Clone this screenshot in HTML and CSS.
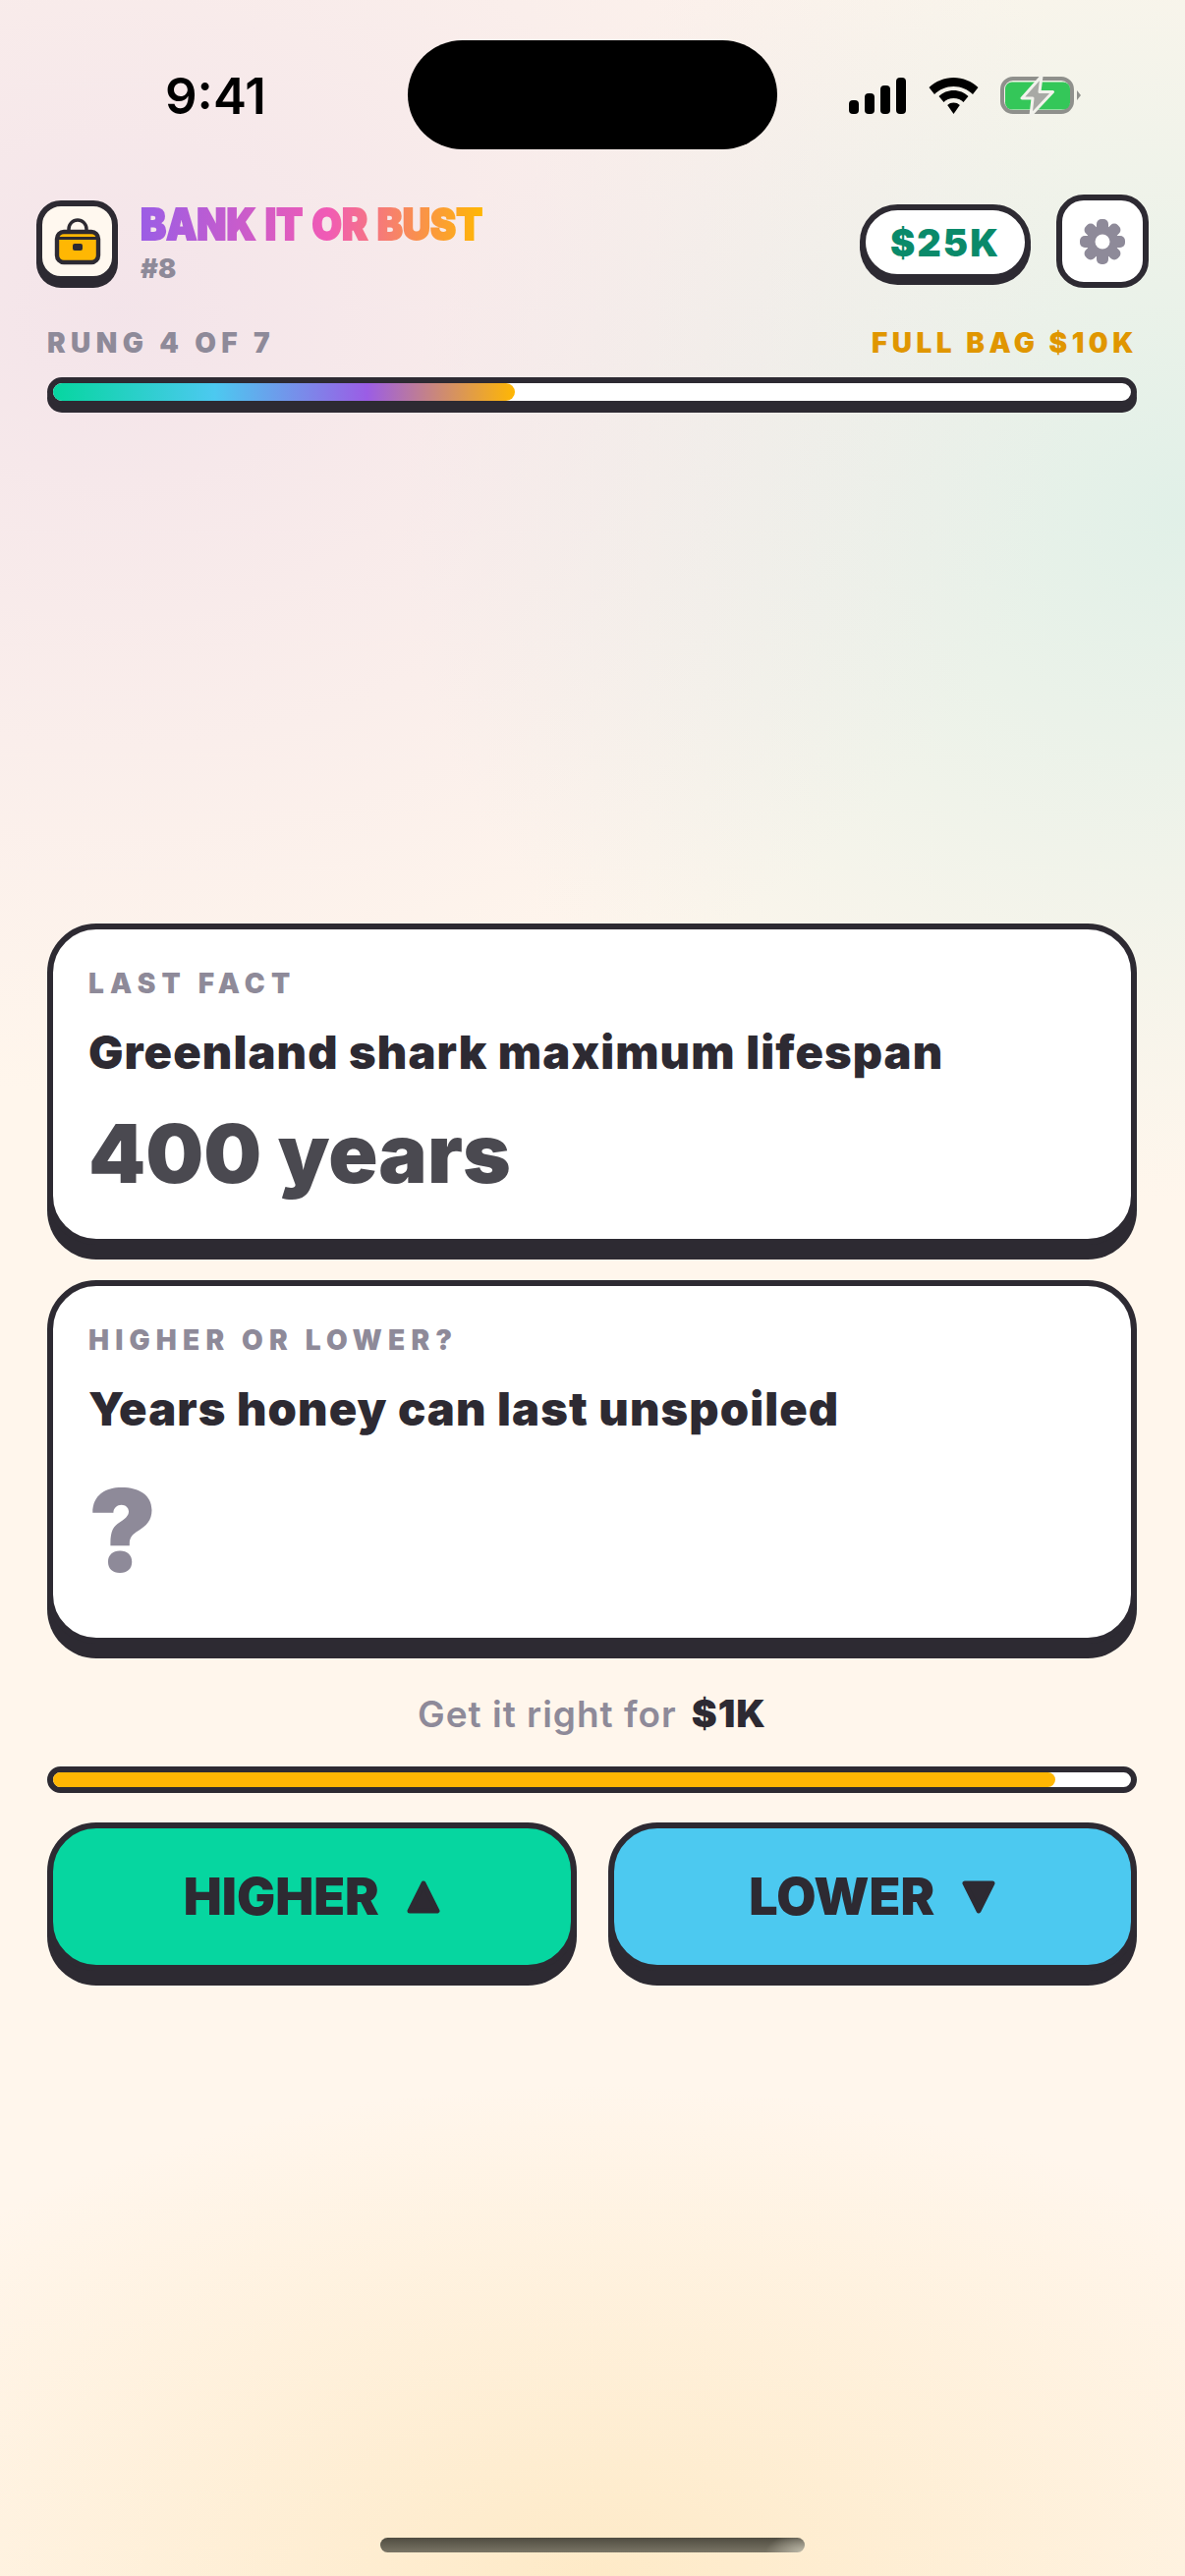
FILE: index.html
```html
<!DOCTYPE html>
<html lang="en">
<head>
    <meta charset="UTF-8">
    <meta name="viewport" content="width=device-width, initial-scale=1.0">
    <title>Bank It Or Bust</title>
    <link rel="stylesheet" href="styles.css">
</head>
<body>
    <div class="phone">
        <!-- status bar -->
        <div class="status-bar">
            <div class="time">9:41</div>
            <div class="notch"></div>
            <div class="status-icons">
                <svg class="ic-signal" width="59" height="37" viewBox="0 0 59 37">
                    <rect x="0" y="23" width="10" height="14" rx="4"/>
                    <rect x="16" y="16" width="10" height="21" rx="4"/>
                    <rect x="32" y="8" width="10" height="29" rx="4"/>
                    <rect x="48" y="0" width="10" height="37" rx="4"/>
                </svg>
                <svg class="ic-wifi" width="51" height="37" viewBox="0 0 51 37">
                    <path d="M25.500 0C35 0 43.800 3.700 50.500 10L45 17C40 12 33 9 25.500 9S11 12 6 17L.5 10C7.200 3.700 16 0 25.500 0Z"/>
                    <path d="M25.500 13C31.300 13 36.600 15.300 40.500 19L35.500 25C33 22.500 29.500 21 25.500 21S18 22.500 15.500 25L10.500 19C14.400 15.300 19.700 13 25.500 13Z"/>
                    <path d="M25.500 25.500C28 25.500 30 26.300 31.800 28L25.500 37L19.200 28C21 26.300 23 25.500 25.500 25.500Z"/>
                </svg>
                <svg class="ic-battery" width="82" height="41" viewBox="0 0 82 41">
                    <rect x="2" y="3" width="71" height="34" rx="11" fill="none" stroke="#8f908c" stroke-width="4"/>
                    <rect x="5" y="6.500" width="66" height="28" rx="7" fill="#34c759"/>
                    <path d="M78 15L82 20L78 25Z" fill="#8f908c"/>
                    <path d="M42 .5L22 23H33L31 40.500L53.500 16.500H40Z" fill="#a8a9a5" stroke="#f2f2ec" stroke-width="3" stroke-linejoin="round"/>
                </svg>
            </div>
        </div>

        <!-- header -->
        <div class="top-row">
            <div class="brand">
                <div class="app-icon">
                    <svg width="48" height="48" viewBox="0 0 48 48">
                        <path d="M15 14V11A9 9 0 0 1 33 11V14" fill="none" stroke="#2d2a32" stroke-width="3.500"/>
                        <rect x="3" y="14" width="42" height="31" rx="7" fill="#ffb703" stroke="#2d2a32" stroke-width="4.400"/>
                        <line x1="3" y1="20.500" x2="45" y2="20.500" stroke="#2d2a32" stroke-width="3"/>
                        <rect x="19" y="26" width="10" height="7" rx="2" fill="#2d2a32"/>
                    </svg>
                </div>
                <div class="brand-text">
                    <div class="brand-title">BANK IT OR BUST</div>
                    <div class="brand-num">#8</div>
                </div>
            </div>
            <div class="top-actions">
                <div class="money-pill">$25K</div>
                <div class="gear-btn">
                    <svg width="46" height="46" viewBox="0 0 46 46" fill="#8e8a99">
                        <circle cx="23" cy="23" r="16"/>
                        <rect x="17" y="0" width="12" height="46" rx="5"/>
                        <rect x="17" y="0" width="12" height="46" rx="5" transform="rotate(45 23 23)"/>
                        <rect x="17" y="0" width="12" height="46" rx="5" transform="rotate(90 23 23)"/>
                        <rect x="17" y="0" width="12" height="46" rx="5" transform="rotate(135 23 23)"/>
                        <circle cx="23" cy="23" r="7.500" fill="#fff"/>
                    </svg>
                </div>
            </div>
        </div>

        <!-- ladder progress -->
        <div class="ladder">
            <div class="ladder-labels">
                <span class="rung">RUNG 4 OF 7</span>
                <span class="full-bag">FULL BAG $10K</span>
            </div>
            <div class="track track-big">
                <div class="fill fill-ladder" style="width: 42.86%"></div>
            </div>
        </div>

        <!-- game -->
        <div class="game">
            <div class="card card-last">
                <div class="card-label">LAST FACT</div>
                <div class="card-title">Greenland shark maximum lifespan</div>
                <div class="card-value">400 years</div>
            </div>
            <div class="card card-next">
                <div class="card-label">HIGHER OR LOWER?</div>
                <div class="card-title">Years honey can last unspoiled</div>
                <div class="card-unknown">?</div>
            </div>
            <div class="reward"><span>Get it right for</span><b>$1K</b></div>
            <div class="track track-timer">
                <div class="fill fill-timer" style="width: 93%"></div>
            </div>
            <div class="choices">
                <button class="choice higher">HIGHER <svg width="34" height="34" viewBox="0 0 34 34"><path d="M17 3L31 31H3Z" fill="#2d2a32" stroke="#2d2a32" stroke-width="5" stroke-linejoin="round"/></svg></button>
                <button class="choice lower">LOWER <svg width="34" height="34" viewBox="0 0 34 34"><path d="M3 3H31L17 31Z" fill="#2d2a32" stroke="#2d2a32" stroke-width="5" stroke-linejoin="round"/></svg></button>
            </div>
        </div>

        <div class="home-indicator"></div>
    </div>
</body>
</html>
```
FILE: styles.css
```css
* {
    box-sizing: border-box;
}

body {
    margin: 0;
    font-family: 'Inter', 'Liberation Sans', sans-serif;
    color: #2d2a32;
}

.phone {
    width: 1206px;
    height: 2622px;
    overflow: hidden;
    display: flex;
    flex-direction: column;
    background:
        radial-gradient(1000px 800px at 10% 12%, rgba(236, 216, 232, 0.6), rgba(236, 216, 232, 0) 100%),
        radial-gradient(800px 700px at 100% 20%, rgba(200, 235, 228, 0.55), rgba(200, 235, 228, 0) 100%),
        radial-gradient(900px 500px at 50% 100%, rgba(253, 226, 175, 0.6), rgba(253, 226, 175, 0) 100%),
        #fff6ec;
}

/* status bar */
.status-bar {
    height: 152px;
    padding-top: 41px;
    display: flex;
    align-items: flex-start;
}

.time {
    width: 415px;
    padding: 32px 0 0 168px;
    font-size: 51px;
    line-height: 50px;
    font-weight: 600;
    color: #000;
}

.notch {
    width: 376px;
    height: 111px;
    border-radius: 56px;
    background: #000;
}

.status-icons {
    display: flex;
    align-items: center;
    margin: 36px 0 0 73px;
}

.ic-signal {
    margin-right: 22px;
}

.ic-wifi {
    margin-right: 22px;
}

/* header */
.top-row {
    display: flex;
    justify-content: space-between;
    align-items: flex-start;
    padding: 46px 37px 0;
    height: 184px;
}

.brand {
    display: flex;
    margin-top: 6px;
}

.app-icon {
    width: 83px;
    height: 83px;
    border: 6px solid #2d2a32;
    border-radius: 25px;
    background: #fff8ef;
    box-shadow: 0 6px 0 #2d2a32;
    display: flex;
    align-items: center;
    justify-content: center;
}

.brand-text {
    margin-left: 23px;
}

.brand-title {
    font-size: 44px;
    line-height: 44px;
    margin-top: 2px;
    font-weight: 900;
    word-spacing: 2px;
    white-space: nowrap;
    transform-origin: left center;
    transform: scaleX(0.89);
    background: linear-gradient(90deg, #9b5de5, #f15bb5 55%, #ffb703);
    -webkit-background-clip: text;
    background-clip: text;
    color: transparent;
    -webkit-text-stroke: 2px transparent;
}

.brand-num {
    font-size: 27px;
    line-height: 34px;
    margin-top: 7px;
    font-weight: 900;
    color: #8e8a99;
}

.top-actions {
    display: flex;
    gap: 26px;
    align-items: flex-start;
}

.money-pill {
    margin-top: 10px;
    width: 174px;
    height: 77px;
    border: 6px solid #2d2a32;
    border-radius: 39px;
    background: #fff;
    box-shadow: 0 5px 0 #2d2a32;
    display: flex;
    align-items: center;
    justify-content: center;
    font-size: 38px;
    font-weight: 900;
    letter-spacing: 2px;
    color: #0a8a6a;
}

.gear-btn {
    width: 94px;
    height: 95px;
    border: 6px solid #2d2a32;
    border-radius: 28px;
    background: #fff;
    display: flex;
    align-items: center;
    justify-content: center;
}

/* ladder */
.ladder {
    margin: -4px 49px 0 48px;
}

.ladder-labels {
    display: flex;
    justify-content: space-between;
    font-size: 28px;
    line-height: 34px;
    font-weight: 900;
    letter-spacing: 5.400px;
    color: #8e8a99;
}

.full-bag {
    color: #e09600;
    letter-spacing: 4.500px;
    margin-right: -1px;
}

.track {
    border: 6px solid #2d2a32;
    border-radius: 15px;
    background: #fff;
    overflow: hidden;
}

.track-big {
    height: 30px;
    margin-top: 18px;
    box-shadow: 0 6px 0 #2d2a32;
    overflow: visible;
}

.track-timer {
    height: 27px;
    margin-top: 31px;
}

.fill {
    height: 100%;
    border-radius: 0 9px 9px 0;
}

.fill-ladder {
    border-radius: 9px;
    background: linear-gradient(90deg, #06d6a0, #4cc9f0 35%, #9b5de5 68%, #ffb703);
}

.fill-timer {
    background: #ffb703;
}

/* game */
.game {
    margin: 526px 49px 0 48px;
}

.card {
    border: 6px solid #2d2a32;
    border-radius: 50px;
    background: #fff;
    box-shadow: 0 15px 0 #2d2a32;
    padding: 38px 36px 0;
}

.card-last {
    height: 327px;
}

.card-next {
    height: 370px;
    margin-top: 36px;
}

.card-label {
    font-size: 28px;
    line-height: 34px;
    font-weight: 900;
    letter-spacing: 6.200px;
    color: #8e8a99;
}

.card-title {
    font-size: 47px;
    line-height: 56px;
    margin-top: 25px;
    font-weight: 900;
    letter-spacing: 1.100px;
}

.card-value {
    font-size: 83px;
    line-height: 100px;
    margin-top: 25px;
    font-weight: 900;
    color: #4a4950;
}

.card-unknown {
    font-size: 116px;
    line-height: 130px;
    margin-top: 31px;
    font-weight: 900;
    color: #8e8a99;
}

.reward {
    margin-top: 49px;
    display: flex;
    justify-content: center;
    align-items: baseline;
    gap: 15px;
    font-size: 37px;
    line-height: 44px;
    font-weight: 600;
    letter-spacing: 1px;
    color: #8e8a99;
}

.reward b {
    font-weight: 900;
    color: #2d2a32;
    font-size: 39px;
}

.choices {
    display: flex;
    gap: 32px;
    margin-top: 30px;
}

.choice {
    flex: 1;
    height: 151px;
    border: 6px solid #2d2a32;
    border-radius: 50px;
    box-shadow: 0 15px 0 #2d2a32;
    padding: 0;
    font-family: inherit;
    font-size: 52px;
    font-weight: 900;
    color: #2d2a32;
    display: flex;
    align-items: center;
    justify-content: center;
    gap: 28px;
}

.higher {
    background: #06d6a0;
}

.lower {
    background: #4cc9f0;
}

.home-indicator {
    margin: auto auto 24px;
    width: 432px;
    height: 15px;
    border-radius: 8px;
    background:
        radial-gradient(40px 20px at 100% 100%, rgba(200, 196, 180, 0.9), rgba(200, 196, 180, 0)),
        linear-gradient(to bottom, #4f4c40, #7a7566);
}
```
